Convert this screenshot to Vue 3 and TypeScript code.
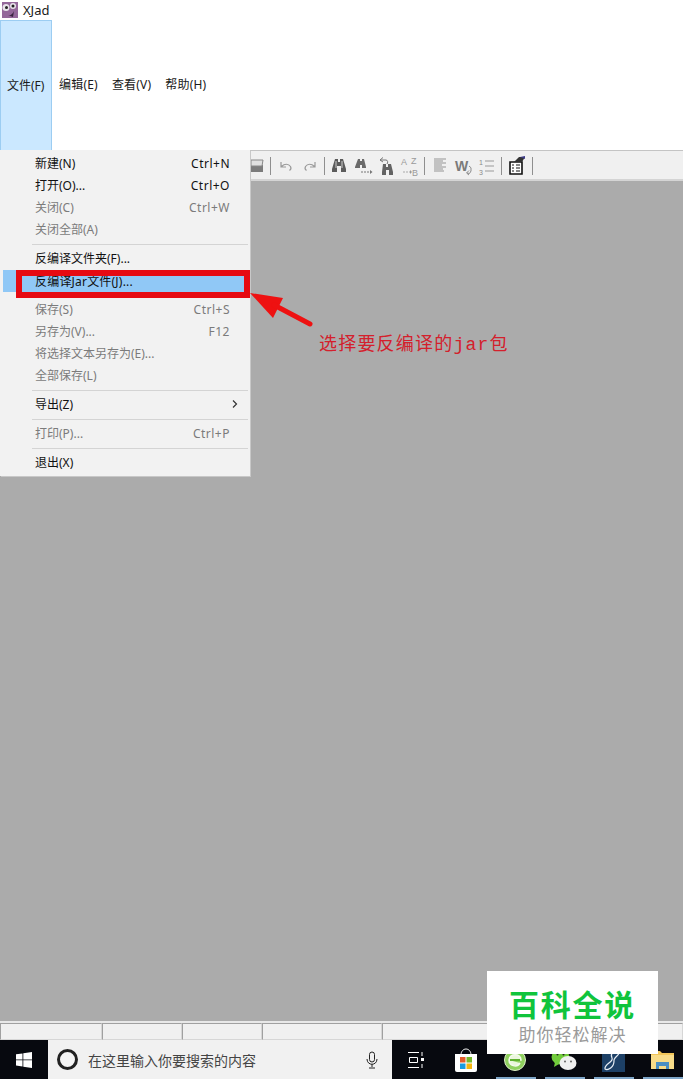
<script setup lang="ts">
interface Row { label?: string; key?: string; off?: boolean; sep?: boolean; arrow?: boolean; sel?: boolean }
const rows: Row[] = [
  { label: '新建(N)', key: 'Ctrl+N' },
  { label: '打开(O)...', key: 'Ctrl+O' },
  { label: '关闭(C)', key: 'Ctrl+W', off: true },
  { label: '关闭全部(A)', off: true },
  { sep: true },
  { label: '反编译文件夹(F)...' },
  { label: '反编译Jar文件(J)...', sel: true },
  { sep: true },
  { label: '保存(S)', key: 'Ctrl+S', off: true },
  { label: '另存为(V)...', key: 'F12', off: true },
  { label: '将选择文本另存为(E)...', off: true },
  { label: '全部保存(L)', off: true },
  { sep: true },
  { label: '导出(Z)', arrow: true },
  { sep: true },
  { label: '打印(P)...', key: 'Ctrl+P', off: true },
  { sep: true },
  { label: '退出(X)' },
]
const menus = ['编辑(E)', '查看(V)', '帮助(H)']
const cells = [102, 80, 80, 120]
</script>

<template>
  <div class="win">
    <header class="title">
      <svg class="logo" width="18" height="18" viewBox="0 0 18 18">
        <rect x="2" y="1" width="16" height="16" fill="#94689a" />
        <ellipse cx="6" cy="6.500" rx="3.500" ry="3.500" fill="#e8e4ea" />
        <ellipse cx="13" cy="5" rx="3" ry="3" fill="#e8e4ea" />
        <circle cx="6.500" cy="6.500" r="1.500" fill="#222" />
        <circle cx="13" cy="5" r="1.500" fill="#222" />
        <path d="M8 14q4 1 6-4l-1 6z" fill="#3a2440" />
      </svg>
      <span>XJad</span>
    </header>
    <nav class="menubar">
      <div class="menu active">文件(F)</div>
      <div v-for="m in menus" :key="m" class="menu">{{ m }}</div>
    </nav>
    <div class="toolbar">
      <svg width="300" height="28" viewBox="0 0 300 28" class="tools">
        <path d="M4 14h14v7H4z" fill="#7c7c7c" />
        <path d="M6 9h12l-1 6H6z" fill="#e0e0e0" stroke="#888" />
        <path d="M25.500 6v18M79.500 6v18M179.500 6v18M256.500 6v18M287.500 6v18" stroke="#8f8f8f" />
        <path d="M36 11v5h5M36.500 15.500c3-3 7-3 9 0 .8 1.500.5 3-1 4" fill="none" stroke="#9a9a9a" stroke-width="1.200" />
        <path d="M70 11v5h-5M69.500 15.500c-3-3-7-3-9 0-.8 1.500-.5 3 1 4" fill="none" stroke="#9a9a9a" stroke-width="1.200" />
        <path d="M90 8h3v3h2V8h3l3 10v3h-5v-6h-4v6h-5v-3z" fill="#5b5b5b" />
        <path d="M91 10v7M97 10v7" stroke="#cfcfcf" />
        <path d="M113 8h2v2h2V8h2l2 8v1h-4v-3h-2v3h-5v-1z" fill="#6a6a6a" />
        <path d="M116 21h10" stroke="#777" stroke-dasharray="2 1" />
        <path d="M125 19l2.500 2-2.500 2z" fill="#777" />
        <path d="M138 13h3v3h2v-3h3l2 8v3h-4v-5h-3v5h-4v-3z" fill="#636363" />
        <path d="M135 9h6c2 0 2 3 1 4M135 9l3-2.500M135 9l3 2" fill="none" stroke="#777" />
        <text x="156" y="14" class="tg">A</text>
        <text x="166" y="13" class="tg">Z</text>
        <text x="167" y="25" class="tg">B</text>
        <path d="M158 21h7" stroke="#aaa" stroke-dasharray="2 1" />
        <path d="M165 19l2 2-2 2z" fill="#999" />
        <path d="M189 8h12M189 10h9M189 12h12M189 14h8M189 16h12M189 18h9M189 20h10" stroke="#949494" />
        <text x="210" y="20" class="tw">W</text>
        <path d="M224 15q3 1 2 5t-4 2m2-2.500-2.500 2.500 2.500 2" fill="none" stroke="#8c8c8c" />
        <text x="234" y="14" class="tn">1</text>
        <text x="234" y="24" class="tn">3</text>
        <path d="M240 10h9M240 15h9M240 20h9" stroke="#9a9a9a" />
        <path d="M265 11h12v12h-12z" fill="#fff" stroke="#111" stroke-width="1.600" />
        <path d="M267 14h2M271 14h4M267 17h2M271 17h4M267 20h2M271 20h4" stroke="#111" />
        <path d="M269 11l5-5 6 0-3 5z" fill="#333" />
        <path d="M275 6l5-1v3z" fill="#3c3a86" />
      </svg>
    </div>
    <main class="work">
      <div class="filemenu">
        <template v-for="(r, i) in rows" :key="i">
          <div v-if="r.sep" class="sep"></div>
          <div v-else class="row" :class="{ off: r.off, sel: r.sel }">
            <span class="label">{{ r.label }}</span>
            <span v-if="r.key" class="key">{{ r.key }}</span>
            <svg v-if="r.arrow" class="arrow" width="6" height="8" viewBox="0 0 6 8"><path d="M1 .5 4.500 4 1 7.500" fill="none" stroke="#333" stroke-width="1.200" /></svg>
          </div>
        </template>
      </div>
      <div class="redbox"></div>
      <svg class="pointer" width="66" height="38" viewBox="0 0 66 38">
        <path d="M0 0 33 5 23 25z" fill="#ee1111" />
        <path d="M24 12 60 31" stroke="#ee1111" stroke-width="5" stroke-linecap="round" />
      </svg>
      <div class="note">选择要反编译的jar包</div>
    </main>
    <div class="status">
      <i v-for="(c, i) in cells" :key="i" :style="{ width: c + 'px' }"></i><i class="last"></i>
    </div>
    <footer class="taskbar">
      <div class="start">
        <svg width="16" height="16" viewBox="0 0 16 16"><path d="M0 2.300 6.500 1.400v6.100H0zM7.300 1.300 16 0v7.500H7.300zM0 8.300h6.500v6.200L0 13.600zM7.300 8.300H16V16l-8.700-1.200z" fill="#fff" /></svg>
      </div>
      <div class="search">
        <span class="cortana"></span>
        <span class="hint">在这里输入你要搜索的内容</span>
        <svg class="mic" width="12" height="18" viewBox="0 0 12 18"><rect x="3.500" y="1" width="5" height="10" rx="2.500" fill="none" stroke="#222" /><path d="M1 8c0 7 10 7 10 0M6 13v3M3 17h6" fill="none" stroke="#222" /></svg>
      </div>
      <div class="tray">
        <svg class="tv" width="18" height="18" viewBox="0 0 18 18"><path d="M1 1.500h11M1 16.500h11M2.500 6.500h8v5h-8zM15 1v4M15 13v4" fill="none" stroke="#fff" /><rect x="14" y="7" width="3" height="3" fill="#fff" /></svg>
        <div class="appslot"><svg width="24" height="24" viewBox="0 0 24 24"><path d="M7 7c0-8 10-8 10 0" fill="none" stroke="#fff" /><path d="M1 6h22v16a2 2 0 0 1-2 2H3a2 2 0 0 1-2-2z" fill="#fff" /><rect x="6" y="9" width="5.500" height="5.500" fill="#e55c2c" /><rect x="12.500" y="9" width="5.500" height="5.500" fill="#76b82a" /><rect x="6" y="15.500" width="5.500" height="5.500" fill="#1a9be0" /><rect x="12.500" y="15.500" width="5.500" height="5.500" fill="#f5b50f" /></svg></div>
        <div class="appslot line"><svg width="24" height="24" viewBox="0 0 24 24"><circle cx="12" cy="12" r="10.500" fill="#8fd05f" stroke="#dff0c8" /><path d="M6 12h12c0-7-11-7-12 0 0 6 8 8 11 3" fill="#eaf6dc" stroke="#f4faec" stroke-width="1.500" /><path d="M7 12h10" stroke="#5fb030" stroke-width="2" /></svg></div>
        <div class="appslot line"><svg width="26" height="22" viewBox="0 0 26 22"><ellipse cx="9.500" cy="8" rx="9" ry="7.500" fill="#72cc3c" /><path d="M4 13l-1 5 5-3z" fill="#72cc3c" /><ellipse cx="17" cy="14" rx="8.500" ry="7" fill="#f0f0f0" /><circle cx="6.500" cy="5.500" r="1" fill="#222" /><circle cx="12.500" cy="5.500" r="1" fill="#222" /><circle cx="14" cy="12.500" r="1" fill="#666" /><circle cx="20" cy="12.500" r="1" fill="#666" /></svg></div>
        <div class="appslot line"><svg width="23" height="24" viewBox="0 0 23 24"><rect width="23" height="24" fill="#1d4066" /><path d="M17 3c-6-1-9 3-7 7 2 4-8 6-7 11 3 2 9-2 9-8-1-4 7-6 5-10z" fill="none" stroke="#e8eef5" stroke-width="1.200" /></svg></div>
        <div class="appslot line"><svg width="23" height="18" viewBox="0 0 23 18"><path d="M0 0h9l2 2h12v16H0z" fill="#f2c65a" /><path d="M0 4h23v14H0z" fill="#f8dc8a" /><path d="M5 11h13v7H5z" fill="#4a8fc4" /><path d="M8 15h7v3H8z" fill="#f8dc8a" /></svg></div>
      </div>
    </footer>
    <aside class="badge">
      <div class="b1">百科全说</div>
      <div class="b2">助你轻松解决</div>
    </aside>
  </div>
</template>

<style>
html, body { margin: 0; }
</style>

<style scoped>
.win { position: relative; width: 683px; height: 1079px; overflow: hidden; display: flex; flex-direction: column; background: #fff; font-family: "Noto Sans", "Noto Sans CJK SC", sans-serif; font-size: 12px; color: #1a1a1a; }
.title { height: 20px; flex: none; display: flex; align-items: center; gap: 5px; font-size: 13px; line-height: 18px; padding-bottom: 1px; box-sizing: border-box; }
.logo { flex: none; }
.menubar { height: 130px; flex: none; display: flex; align-items: center; }
.menu { height: 100%; display: flex; align-items: center; padding: 0 7px 2px; box-sizing: border-box; white-space: nowrap; letter-spacing: .2px; }
.menu.active { width: 52px; background: #cbe8ff; border: 1px solid #9ccdf2; border-bottom: 0; padding: 0 6px 2px; letter-spacing: 0; }
.toolbar { height: 28px; flex: none; background: #f0f0f0; border-top: 1px solid #c4c4c4; border-bottom: 2px solid #d4d4d4; padding-left: 245px; display: flex; align-items: center; }
.tools { display: block; }
.tg { font-family: "Liberation Sans", sans-serif; font-size: 9px; fill: #9a9a9a; }
.tw { font-family: "Liberation Sans", sans-serif; font-size: 14px; font-weight: 700; fill: #7a7a7a; }
.tn { font-family: "Liberation Sans", sans-serif; font-size: 7px; fill: #8a8a8a; }
.work { flex: 1; position: relative; background: #ababab; }
.filemenu { position: absolute; left: 0; top: -31px; width: 250px; height: 326px; box-sizing: border-box; padding: 2px 0 0; background: #f2f2f2; box-shadow: 1px 1px 0 #c8c8c8; }
.row { height: 22px; display: flex; align-items: center; justify-content: space-between; padding: 0 20px 0 35px; color: #111; }
.row.off { color: #7b7b7b; }
.row.sel { background: #90c8f6; margin: 1px 0 0 3px; padding-left: 32px; letter-spacing: .2px; }
.key { letter-spacing: .5px; }
.arrow { margin-right: -8px; }
.sep { height: 1px; margin: 4px 2px 2px 32px; background: #d4d4d4; }
.row.sel + .sep { margin: 3px 2px 2px 32px; }
.redbox { position: absolute; left: 16px; top: 89px; width: 234px; height: 28px; box-sizing: border-box; border: 6px solid #e60a12; }
.pointer { position: absolute; left: 250px; top: 112px; }
.note { position: absolute; left: 319px; top: 152px; font-family: "Liberation Mono", "Noto Sans CJK SC", monospace; font-size: 18px; line-height: 24px; color: #d4202c; letter-spacing: 1.200px; white-space: nowrap; }
.status { height: 17px; flex: none; display: flex; background: #f0f0f0; border-top: 2px solid #e8e8e8; }
.status i { display: block; box-sizing: border-box; height: 100%; border: 1px solid #d6d6d6; border-top-color: #a0a0a0; border-left-color: #a0a0a0; }
.status .last { flex: 1; }
.taskbar { height: 39px; flex: none; background: #07090f; display: flex; align-items: stretch; }
.start { width: 48px; flex: none; display: flex; align-items: center; justify-content: center; }
.search { width: 344px; flex: none; background: #f1f1f1; display: flex; align-items: center; padding: 0 14px 0 9px; box-sizing: border-box; }
.cortana { width: 15px; height: 15px; border: 3px solid #222; border-radius: 50%; background: #f5f5f5; flex: none; }
.hint { margin-left: 10px; flex: 1; font-size: 14px; color: #444; }
.tray { flex: 1; display: flex; align-items: center; padding-left: 15px; }
.tv { flex: none; margin-right: 16.500px; }
.appslot { width: 49px; height: 39px; display: flex; align-items: center; justify-content: center; position: relative; flex: none; }
.line::after { content: ""; position: absolute; left: 5px; right: 4px; bottom: 0; height: 2px; background: #7ea6c9; }
.badge { position: absolute; left: 487px; top: 971px; width: 171px; height: 83px; background: #fff; text-align: center; display: flex; flex-direction: column; align-items: center; }
.b1 { margin-top: 16px; font-size: 30px; line-height: 36px; font-weight: 700; color: #10c43c; letter-spacing: 1.800px; white-space: nowrap; }
.b2 { font-size: 17px; line-height: 20px; margin-top: 2px; color: #9a9a9a; letter-spacing: 1px; white-space: nowrap; }
</style>
